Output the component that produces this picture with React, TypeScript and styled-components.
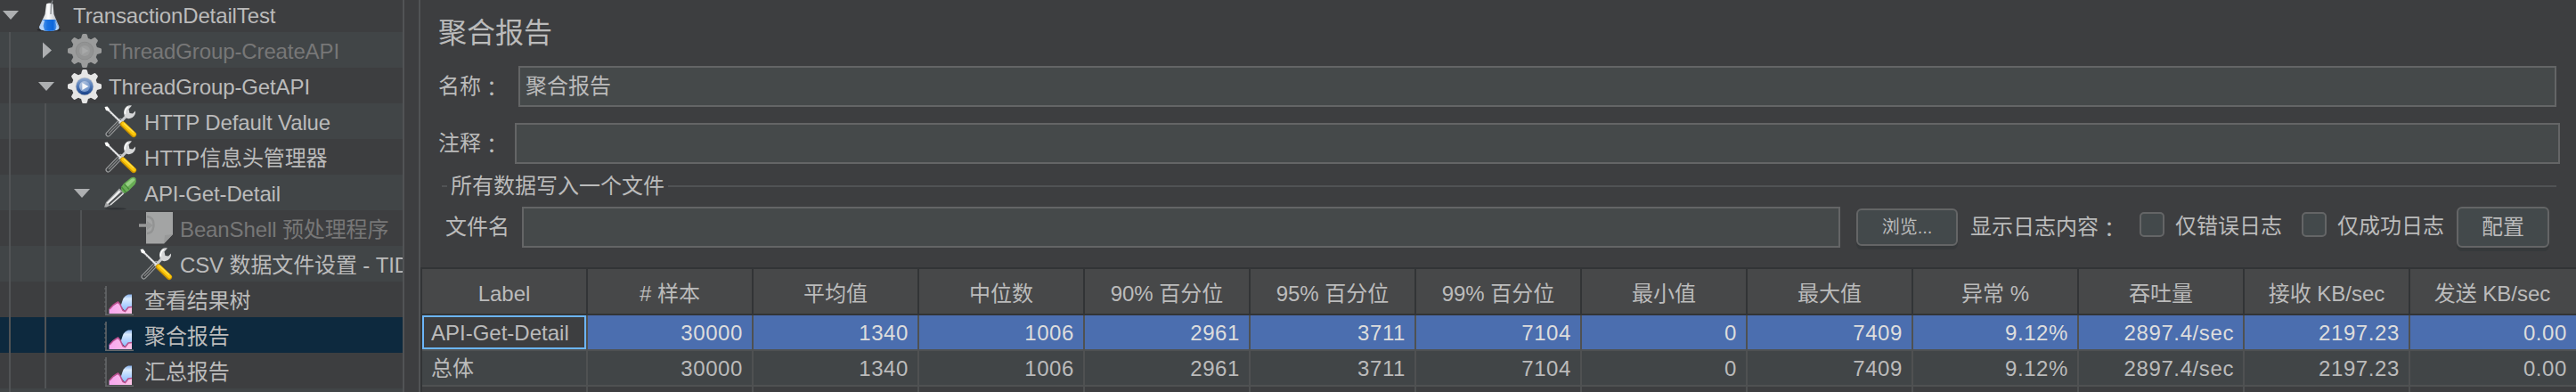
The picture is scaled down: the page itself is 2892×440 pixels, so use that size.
import React from "react";
import styled, { createGlobalStyle } from "styled-components";

const c = {
  panel: "#3d3e40",
  stripe: "#414547",
  field: "#45494a",
  border: "#646566",
  divider: "#515355",
  text: "#bbbbbb",
  disabled: "#777777",
  treeSelection: "#0d293e",
  rowSelection: "#4b6eaf",
  header: "#474849",
  headerLine: "#323436",
  grid: "#4f5152",
  focus: "#6cb5f9",
};

const Global = createGlobalStyle`
  * { box-sizing: border-box; }
  body {
    margin: 0;
    background: ${c.panel};
    color: ${c.text};
    font-family: "Liberation Sans", "Noto Sans CJK SC", sans-serif;
    font-size: 24px;
    line-height: 40px;
  }
`;

const Window = styled.div`
  display: flex;
  height: 440px;
  overflow: hidden;
  background: ${c.panel};
`;

const TreePanel = styled.div`
  flex: none;
  width: 454px;
  height: 440px;
  overflow: hidden;
  border-right: 2px solid ${c.divider};
`;

const TreeList = styled.div`
  margin-top: -4px;
`;

const TreeRow = styled.div<{ $bg: string; $disabled?: boolean }>`
  display: flex;
  height: 40px;
  background: ${(p) => p.$bg};
  color: ${(p) => (p.$disabled ? c.disabled : c.text)};
  white-space: pre;
`;

const Guide = styled.div`
  flex: none;
  width: 2px;
  height: 40px;
  margin: 0 28px 0 10px;
  background: ${c.divider};
`;

const Glyph = styled.svg`
  flex: none;
  display: block;
  height: 40px;
`;

const TreeText = styled.span`
  flex: none;
  padding-left: 6px;
  line-height: 43px;
  letter-spacing: -0.12px;
`;

const Splitter = styled.div`
  flex: none;
  width: 18px;
  border-right: 2px solid ${c.divider};
`;

const Main = styled.div`
  flex: 1;
  min-width: 0;
  display: flex;
  flex-direction: column;
`;

const Title = styled.div`
  flex: none;
  height: 74px;
  padding-left: 20px;
  font-size: 32px;
  line-height: 74px;
`;

const FieldRow = styled.div<{ $right: number; $gap: number }>`
  flex: none;
  display: flex;
  height: 46px;
  margin: 0 ${(p) => p.$right}px ${(p) => p.$gap}px 20px;
  line-height: 46px;
`;

const FieldLabel = styled.span<{ $width: number }>`
  flex: none;
  width: ${(p) => p.$width}px;
  white-space: nowrap;
`;

const Colon = styled.span`
  font-family: "Noto Sans CJK TC", sans-serif;
  line-height: 1;
  vertical-align: -3px;
`;

const TextField = styled.div<{ $width?: number }>`
  flex: ${(p) => (p.$width ? "none" : 1)};
  width: ${(p) => (p.$width ? `${p.$width}px` : "auto")};
  height: 46px;
  padding-left: 6px;
  border: 2px solid ${c.border};
  background: ${c.field};
  line-height: 42px;
`;

const Legend = styled.div`
  flex: none;
  display: flex;
  align-items: center;
  gap: 4px;
  height: 48px;
  padding: 2px 22px 0 24px;
`;

const LegendText = styled.span`
  line-height: 42px;
`;

const LegendRule = styled.div<{ $width?: number }>`
  flex: ${(p) => (p.$width ? "none" : 1)};
  width: ${(p) => (p.$width ? `${p.$width}px` : "auto")};
  height: 2px;
  background: ${c.divider};
`;

const FileRow = styled.div`
  flex: none;
  display: flex;
  height: 68px;
  padding-left: 28px;
  line-height: 46px;
`;

const Button = styled.div<{ $width: number; $height: number; $small?: boolean }>`
  flex: none;
  width: ${(p) => p.$width}px;
  height: ${(p) => p.$height}px;
  margin: ${(p) => (p.$small ? "2px 0 0 18px" : "0")};
  border: 2px solid ${c.border};
  border-radius: 6px;
  background: #43494b;
  box-shadow: 0 4px 0 #36393b;
  font-size: ${(p) => (p.$small ? 20 : 24)}px;
  line-height: ${(p) => p.$height - 4}px;
  text-align: center;
`;

const LogLabel = styled.span`
  flex: none;
  width: 204px;
  padding-left: 14px;
  white-space: nowrap;
`;

const CheckOption = styled.div<{ $width: number }>`
  flex: none;
  display: flex;
  gap: 12px;
  width: ${(p) => p.$width}px;
  line-height: 43px;
  white-space: nowrap;
`;

const CheckBox = styled.div`
  flex: none;
  width: 28px;
  height: 28px;
  margin-top: 6px;
  border: 2px solid ${c.border};
  border-radius: 5px;
  background: #43494b;
`;

const Table = styled.div`
  flex: none;
  display: flex;
  flex-direction: column;
  border-left: 2px solid ${c.headerLine};
`;

const HeaderRow = styled.div`
  flex: none;
  display: flex;
  height: 54px;
  border-top: 2px solid ${c.headerLine};
  border-bottom: 2px solid ${c.headerLine};
  background: ${c.header};
`;

const HeaderCell = styled.div`
  flex: none;
  width: 186px;
  border-right: 2px solid ${c.headerLine};
  line-height: 55px;
  text-align: center;
  white-space: nowrap;
  &:last-child { border-right-color: transparent; }
`;

const BodyRow = styled.div<{ $selected?: boolean; $bg: string }>`
  flex: none;
  display: flex;
  height: 40px;
  background: ${(p) => p.$bg};
  color: ${(p) => (p.$selected ? "#dddddd" : c.text)};
`;

const Cell = styled.div`
  flex: none;
  width: 186px;
  padding-right: 10px;
  border-right: 2px solid ${c.grid};
  border-bottom: 2px solid ${c.grid};
  line-height: 39px;
  letter-spacing: 0.6px;
  text-align: right;
  &:last-child { border-right: 0; }
`;

const NameCell = styled(Cell)<{ $focused?: boolean }>`
  padding: 0 0 0 10px;
  letter-spacing: 0;
  text-align: left;
  color: ${c.text};
  background: ${(p) => (p.$focused ? c.panel : "transparent")};
  background-clip: padding-box;
  box-shadow: ${(p) => (p.$focused ? `inset 0 0 0 2px ${c.focus}` : "none")};
`;

type ArrowKind = "open" | "closed" | "none";

const Arrow = ({ kind }: { kind: ArrowKind }) => (
  <Glyph width="36" viewBox="0 0 36 40">
    {kind === "open" && <path d="M3 16H21L12 26Z" fill="#adafb1" />}
    {kind === "closed" && <path d="M8 11.5L18 20.5L8 29.5Z" fill="#adafb1" />}
  </Glyph>
);

const Flask = () => (
  <Glyph width="40" viewBox="0 0 40 40">
    <defs>
      <linearGradient id="glass" x1="0" x2="1">
        <stop offset="0" stopColor="#aeb4bb" />
        <stop offset=".45" stopColor="#fff" />
        <stop offset="1" stopColor="#a5abb3" />
      </linearGradient>
      <linearGradient id="liquid" x1="0" x2="1">
        <stop offset="0" stopColor="#74aef0" />
        <stop offset=".4" stopColor="#1a73e2" />
        <stop offset=".7" stopColor="#0b66dc" />
        <stop offset="1" stopColor="#8ebcf0" />
      </linearGradient>
    </defs>
    <ellipse cx="19" cy="37.5" rx="13.500" ry="1.8" fill="#26282b" />
    <path d="M16 8.500Q19.500 6.500 23.500 8.500L24.500 20L30.500 34Q31.500 38.700 19.300 39Q7 38.700 8 34L14.500 20Z" fill="url(#glass)" />
    <path d="M12 26H26.500L30 34Q30.500 38.700 19.300 38.900Q7.500 38.700 8.500 34Z" fill="url(#liquid)" />
    <path d="M8.500 34Q8 38 14 38L12.500 33L14 27H11.700Z" fill="#b6d4f7" />
    <path d="M26 27L30 35Q30 37.500 26 38.200L27.500 34Z" fill="#b6d4f7" />
    <path d="M23 4.500L21.500 9L21 20" fill="none" stroke="#8b8f93" strokeWidth="1.300" />
  </Glyph>
);

const Gear = ({ disabled }: { disabled?: boolean }) => {
  const body = disabled ? "#9b9c9c" : "#e6e6e6";
  return (
    <Glyph width="40" viewBox="0 0 40 40">
      <defs>
        <linearGradient id="gearRing" x1="0" y1="0" x2="0" y2="1">
          <stop offset="0" stopColor="#8fa9cf" />
          <stop offset=".5" stopColor="#4f78b5" />
          <stop offset="1" stopColor="#163f86" />
        </linearGradient>
        <linearGradient id="gearHub" x1="0" y1="0" x2="1" y2="1">
          <stop offset="0" stopColor="#c3d0e4" />
          <stop offset="1" stopColor="#5c86c4" />
        </linearGradient>
      </defs>
      {[0, 45, 90, 135, 180, 225, 270, 315].map((a) => (
        <path
          key={a}
          d="M14.800 8L16 3.500Q16.300 2 17.500 2H20.500Q21.700 2 22 3.500L23.200 8Z"
          fill={body}
          transform={`rotate(${a} 19 21)`}
        />
      ))}
      <circle cx="19" cy="21" r="14.500" fill={body} />
      <circle cx="19" cy="21" r="10.300" fill={disabled ? "#8a8b8b" : "#c3c7cd"} />
      <circle cx="19" cy="21" r="9.500" fill={disabled ? "#929393" : "url(#gearRing)"} />
      <circle cx="19" cy="21" r="6" fill={disabled ? "#9c9d9d" : "url(#gearHub)"} />
      <path d="M16.300 17L23.500 21L16.300 25Z" fill={disabled ? "#a8a9a9" : "#f5f7fa"} />
    </Glyph>
  );
};

const Tools = () => (
  <Glyph width="40" viewBox="0 0 40 40">
    <path d="M5.500 34.500L19.500 20" stroke="#989a9b" strokeWidth="6" strokeLinecap="round" />
    <path d="M5.500 34.500L19.500 20" stroke="#3c3f41" strokeWidth="3.600" strokeLinecap="round" />
    <path d="M6 34L19 20.500" stroke="#858788" strokeWidth="1.200" />
    <path d="M18 22.500L27 13" stroke="#c9cbcc" strokeWidth="3.200" />
    <path
      d="M23.500 13.500Q22 7 26 3.500Q29 1.500 32 2.500L28.500 6.500L29.500 11L33 11.500L36 8.500Q36.500 13 32.500 16Q29 18 26 16.500Z"
      fill="#d5d6d7"
    />
    <path d="M24.500 12Q23.500 7 28 4" fill="none" stroke="#fff" strokeWidth="1.500" />
    <path d="M3 5L21 22.500" stroke="#e4e5e6" strokeWidth="2.400" />
    <path d="M4 7L20 23" stroke="#8d8f91" strokeWidth=".9" strokeDasharray="2 1.500" />
    <path d="M1.500 4L4.500 3.500L7 6.500L6 8.500L3 8Z" fill="#fff" />
    <path d="M22 23.500L34 35" stroke="#c99300" strokeWidth="6.200" strokeLinecap="round" />
    <path d="M22.300 23L34.500 34.500" stroke="#fcc70b" strokeWidth="4.200" strokeLinecap="round" />
    <path d="M23 22.500L34 32.500" stroke="#ffe14e" strokeWidth="1.200" />
  </Glyph>
);

const Pipette = () => (
  <Glyph width="40" viewBox="0 0 40 40">
    <ellipse cx="14" cy="38.300" rx="12" ry="1.300" fill="#303336" />
    <path d="M1 36.500L3 31L18 15.500L23.500 21L8 34.500L3.500 36.500Z" fill="#a6a8a9" />
    <path d="M4.500 32.500L18.500 18.500" stroke="#f1f1f1" strokeWidth="2.200" />
    <path d="M6 33.500L21 20" stroke="#4d5052" strokeWidth="1.800" />
    <path d="M8 34L22.500 21.300" stroke="#dcdddd" strokeWidth="1.200" />
    <path d="M20 14L23 10L31 3.500Q35.500 1.500 36.500 4.500Q37.500 8 35.500 11L28.500 18L24 21Q19.500 19 20 14Z" fill="#68ad55" />
    <path d="M24 11L32 4.500Q35 3.500 35.500 6L26 15Z" fill="#96cf83" />
    <path d="M20.500 14L25.500 20M23.500 10.500L29 16.500" stroke="#478c38" strokeWidth="1.400" />
  </Glyph>
);

const Script = () => (
  <Glyph width="40" viewBox="0 0 40 40">
    <path d="M8 2H38V27L28 37.500H8Z" fill="#a3a4a4" />
    <path d="M38 27L28 37.500L29 28Z" fill="#989999" />
    <path d="M9 7Q17 8 16.500 17Q16 26 9 26" fill="none" stroke="#929393" strokeWidth="2.400" />
    <path d="M0 15.200H9V12L16 17L9 22V18.800H0Z" fill="#969797" />
  </Glyph>
);

const Chart = () => (
  <Glyph width="40" viewBox="0 0 40 40">
    <defs>
      <linearGradient id="blueArea" x1="0" y1="0" x2="0" y2="1">
        <stop offset="0" stopColor="#86b0ea" />
        <stop offset=".25" stopColor="#dcecff" />
        <stop offset=".6" stopColor="#b0d2ff" />
        <stop offset="1" stopColor="#86b8f8" />
      </linearGradient>
      <linearGradient id="pinkArea" x1="0" y1="0" x2="1" y2="0">
        <stop offset="0" stopColor="#f7a6f0" />
        <stop offset="1" stopColor="#fbc3e6" />
      </linearGradient>
    </defs>
    <path d="M3 5V38M2 37.200H34" stroke="#66686a" strokeWidth="1.500" fill="none" />
    <path d="M1 8H3M1 13H3M1 18H3M1 23H3M1 28H3M1 33H3" stroke="#66686a" strokeWidth="1" />
    <path d="M19.500 27.500L22 20Q23.500 16 28 14.500H32V32L25 34Z" fill="url(#blueArea)" />
    <path d="M6.500 36V31L11 26.500L14 24.500L16.500 23L19 26L22 32.500L24.500 33.500L28 29L32 28.500V36Z" fill="url(#pinkArea)" />
    <path d="M7 31L11 26.500L14 24.500L16.500 23L19 26L22 32.500L24.500 33.500L28 29L32 28.500" fill="none" stroke="#b9508f" strokeWidth="1.600" />
  </Glyph>
);

type Item = {
  level: number;
  arrow: ArrowKind;
  icon: React.ReactNode;
  text: string;
  disabled?: boolean;
  selected?: boolean;
};

const items: Item[] = [
  { level: 0, arrow: "open", icon: <Flask />, text: "TransactionDetailTest" },
  { level: 1, arrow: "closed", icon: <Gear disabled />, text: "ThreadGroup-CreateAPI", disabled: true },
  { level: 1, arrow: "open", icon: <Gear />, text: "ThreadGroup-GetAPI" },
  { level: 2, arrow: "none", icon: <Tools />, text: "HTTP Default Value" },
  { level: 2, arrow: "none", icon: <Tools />, text: "HTTP信息头管理器" },
  { level: 2, arrow: "open", icon: <Pipette />, text: "API-Get-Detail" },
  { level: 3, arrow: "none", icon: <Script />, text: "BeanShell 预处理程序", disabled: true },
  { level: 3, arrow: "none", icon: <Tools />, text: "CSV 数据文件设置 - TID" },
  { level: 2, arrow: "none", icon: <Chart />, text: "查看结果树" },
  { level: 2, arrow: "none", icon: <Chart />, text: "聚合报告", selected: true },
  { level: 2, arrow: "none", icon: <Chart />, text: "汇总报告" },
];

const headers = [
  "Label", "# 样本", "平均值", "中位数", "90% 百分位", "95% 百分位", "99% 百分位",
  "最小值", "最大值", "异常 %", "吞吐量", "接收 KB/sec", "发送 KB/sec",
];

const values = ["30000", "1340", "1006", "2961", "3711", "7104", "0", "7409", "9.12%", "2897.4/sec", "2197.23", "0.00"];

export default function App() {
  return (
    <>
      <Global />
      <Window>
        <TreePanel>
          <TreeList>
            {items.map((it, i) => (
              <TreeRow
                key={i}
                $disabled={it.disabled}
                $bg={it.selected ? c.treeSelection : i % 2 ? c.stripe : c.panel}
              >
                {Array.from({ length: it.level }, (_, n) => <Guide key={n} />)}
                <Arrow kind={it.arrow} />
                {it.icon}
                <TreeText>{it.text}</TreeText>
              </TreeRow>
            ))}
            <TreeRow $bg={c.stripe}>
              <Guide />
            </TreeRow>
          </TreeList>
        </TreePanel>
        <Splitter />
        <Main>
          <Title>聚合报告</Title>
          <FieldRow $right={22} $gap={18}>
            <FieldLabel $width={90}>名称<Colon>：</Colon></FieldLabel>
            <TextField>聚合报告</TextField>
          </FieldRow>
          <FieldRow $right={18} $gap={0}>
            <FieldLabel $width={86}>注释<Colon>：</Colon></FieldLabel>
            <TextField />
          </FieldRow>
          <Legend>
            <LegendRule $width={6} />
            <LegendText>所有数据写入一个文件</LegendText>
            <LegendRule />
          </Legend>
          <FileRow>
            <FieldLabel $width={86}>文件名</FieldLabel>
            <TextField $width={1480} />
            <Button $width={114} $height={42} $small>浏览...</Button>
            <LogLabel>显示日志内容<Colon>：</Colon></LogLabel>
            <CheckOption $width={182}>
              <CheckBox />
              仅错误日志
            </CheckOption>
            <CheckOption $width={174}>
              <CheckBox />
              仅成功日志
            </CheckOption>
            <Button $width={104} $height={46}>配置</Button>
          </FileRow>
          <Table>
            <HeaderRow>
              {headers.map((h) => <HeaderCell key={h}>{h}</HeaderCell>)}
            </HeaderRow>
            <BodyRow $selected $bg={c.rowSelection}>
              <NameCell $focused>API-Get-Detail</NameCell>
              {values.map((v, i) => <Cell key={i}>{v}</Cell>)}
            </BodyRow>
            <BodyRow $bg={c.stripe}>
              <NameCell>总体</NameCell>
              {values.map((v, i) => <Cell key={i}>{v}</Cell>)}
            </BodyRow>
            <BodyRow $bg={c.panel}>
              <NameCell />
              {values.map((_, i) => <Cell key={i} />)}
            </BodyRow>
          </Table>
        </Main>
      </Window>
    </>
  );
}
